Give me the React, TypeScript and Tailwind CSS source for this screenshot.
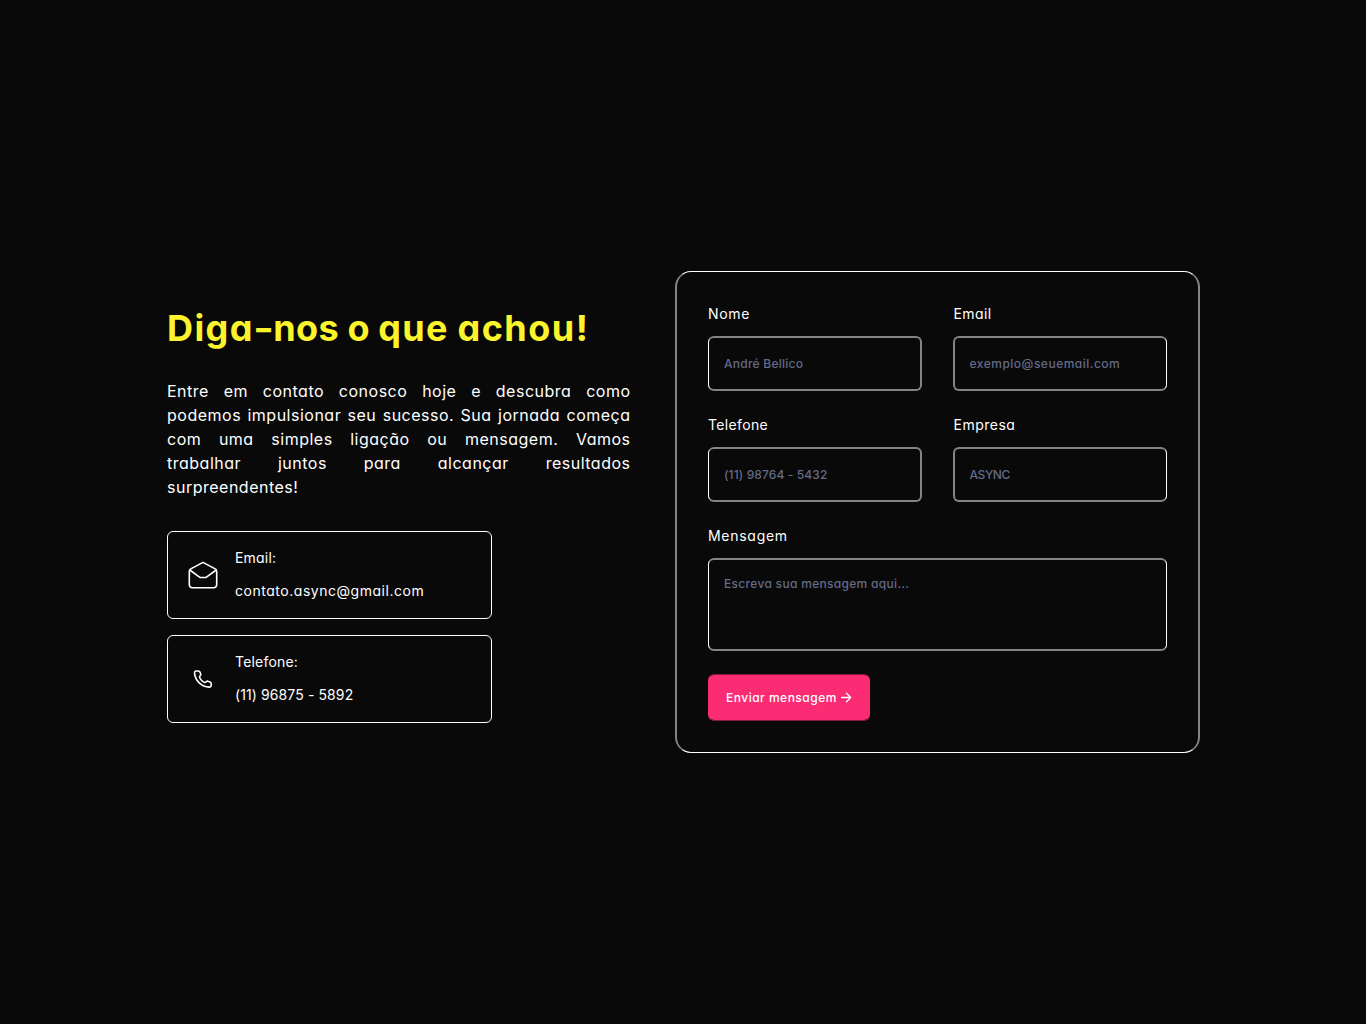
import type { ReactNode } from "react";

const paragraph = [
  "Entre em contato conosco hoje e descubra como",
  "podemos impulsionar seu sucesso. Sua jornada começa",
  "com uma simples ligação ou mensagem. Vamos",
  "trabalhar juntos para alcançar resultados",
];

function MailOpenIcon() {
  return (
    <svg width="32" height="32" viewBox="0 0 32 32" fill="none" stroke="currentColor" strokeWidth="1.6" strokeLinejoin="round" strokeLinecap="round">
      <path d="M2.3 12.5a3 3 0 0 1 1.500-2.600L16 3.400l12.200 6.500a3 3 0 0 1 1.500 2.600v13.300a3 3 0 0 1-3 3H5.300a3 3 0 0 1-3-3z" />
      <path d="m2.800 11 9.400 6.800c.7.500 1.300.7 2.100.7h3.400c.8 0 1.400-.2 2.100-.7l9.400-6.800" />
    </svg>
  );
}

function PhoneIcon() {
  return (
    <svg width="20" height="20" viewBox="0 0 20 20" fill="none" stroke="currentColor" strokeWidth="1.6" strokeLinejoin="round" strokeLinecap="round">
      <path d="M3.300 2h2.100c.7 0 1.300.5 1.600 1.100l.7 1.900c.2.600 0 1.200-.4 1.600-.6.700-1 1.300-.6 2.100.8 1.800 2.600 3.700 4.600 4.700.7.300 1.300 0 1.900-.7.500-.6 1.100-.8 1.800-.5l2 .8c.7.300 1.200.9 1.200 1.600v1.700c0 1.100-.9 1.900-2 1.800C8.400 17.700 2.200 11.900 1.500 3.900c-.1-1 .7-1.900 1.800-1.900z" />
    </svg>
  );
}

function ContactCard({ icon, children }: { icon: ReactNode; children: ReactNode }) {
  return (
    <div className="flex h-[88px] w-[325px] items-center rounded-md border border-white pl-[19px]">
      <div className="flex w-8 justify-center">{icon}</div>
      <div className="mb-px ml-4 flex flex-col gap-[13px] text-sm/5 whitespace-nowrap">{children}</div>
    </div>
  );
}

function Field({ label, labelClass, placeholder, inputClass, boxClass }: { label: string; labelClass: string; placeholder: string; inputClass: string; boxClass: string }) {
  return (
    <label className="block">
      <span className={`block text-sm/5 ${labelClass}`}>{label}</span>
      <input
        placeholder={placeholder}
        className={`mt-3 block h-[55px] w-full rounded-md border-y-2 border-y-[#848484] text-xs font-medium outline-none placeholder:text-[#646b87] ${boxClass} ${inputClass}`}
      />
    </label>
  );
}

const leftBox = "border-l border-l-white border-r-2 border-r-[#848484] pl-[15px]";
const rightBox = "border-l-2 border-l-[#848484] border-r border-r-white pl-[14.5px]";

export default function App() {
  return (
    <main className="flex h-screen min-h-[1024px] items-center gap-[45px] overflow-hidden bg-[#090909] pl-[167px] font-['Inter',sans-serif] text-white [font-feature-settings:'cv11']">
      <section className="mt-[6px] w-[463px]">
        <h1 className="h-10 text-4xl/10 font-bold whitespace-nowrap text-[#fbf32c]">
          <span className="tracking-[1.4px]">Diga</span>
          <span className="mr-[1.5px] ml-[1px] inline-block scale-x-125">-</span>
          <span className="tracking-[0.4px]">nos</span> <span>o</span>{" "}
          <span className="tracking-[1.4px]">que</span>{" "}
          <span className="tracking-[1.5px]">achou!</span>
        </h1>
        <p className="mt-[31px] text-base/6 tracking-[0.5px]">
          {paragraph.map((line) => (
            <span key={line} className="-mr-[0.5px] block whitespace-nowrap text-justify [text-align-last:justify]">{line}</span>
          ))}
          <span className="block">surpreendentes!</span>
        </p>
        <div className="mt-8 flex flex-col gap-4">
          <ContactCard icon={<MailOpenIcon />}>
            <span className="tracking-[0.2px]">Email:</span>
            <span className="tracking-[0.53px]">contato.async@gmail.com</span>
          </ContactCard>
          <ContactCard icon={<PhoneIcon />}>
            <span className="tracking-[0.2px]">Telefone:</span>
            <span className="tracking-[0.1px]">(11) 96875 - 5892</span>
          </ContactCard>
        </div>
      </section>

      <form className="w-[525px] rounded-2xl border-x-2 border-y border-x-[#848484] border-y-white px-[31px] pt-8 pb-[31px]" onSubmit={(e) => e.preventDefault()}>
        <div className="grid grid-cols-2 gap-x-[31px] gap-y-6">
          <Field label="Nome" labelClass="tracking-[0.7px]" placeholder="André Bellico" inputClass="tracking-[0.25px]" boxClass={leftBox} />
          <Field label="Email" labelClass="pl-[0.5px] tracking-[0.4px]" placeholder="exemplo@seuemail.com" inputClass="tracking-[0.5px]" boxClass={rightBox} />
          <Field label="Telefone" labelClass="tracking-[0.35px]" placeholder="(11) 98764 - 5432" inputClass="tracking-[0.12px]" boxClass={leftBox} />
          <Field label="Empresa" labelClass="pl-[0.5px] tracking-[0.5px]" placeholder="ASYNC" inputClass="tracking-[-0.4px]" boxClass={rightBox} />
        </div>
        <label className="mt-6 block">
          <span className="block text-sm/5 tracking-[0.72px]">Mensagem</span>
          <textarea
            placeholder="Escreva sua mensagem aqui..."
            className="mt-3 block h-[93px] w-full resize-none rounded-md border-x border-y-2 border-x-white border-y-[#848484] px-[15px] pt-4 text-xs/4 font-medium tracking-[0.31px] outline-none placeholder:text-[#646b87]"
          />
        </label>
        <button className="mt-[23px] flex h-[47px] w-[162px] items-center rounded-md border-y border-y-[#831c40] bg-[#fb2c73] bg-clip-padding pl-[18px] text-xs font-medium tracking-[0.5px] whitespace-nowrap">
          Enviar mensagem
          <svg className="ml-[3px]" width="12" height="12" viewBox="0 0 12 12" fill="none" stroke="currentColor" strokeWidth="1.300" strokeLinecap="round" strokeLinejoin="round">
            <path d="M1.500 5.500h9M6.500 1.200l4.200 4.300-4.200 4.300" />
          </svg>
        </button>
      </form>
    </main>
  );
}
